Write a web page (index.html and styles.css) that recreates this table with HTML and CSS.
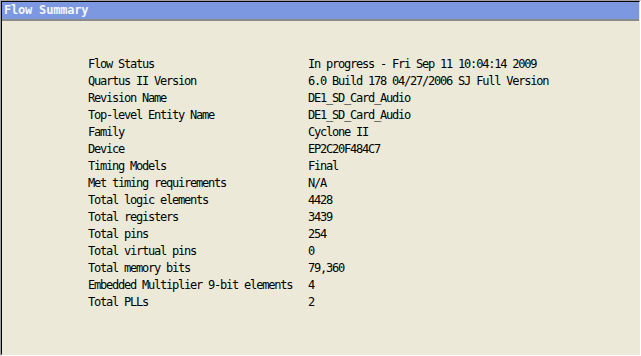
FILE: index.html
```html
<!DOCTYPE html>
<html>
<head>
<meta charset="utf-8">
<link rel="stylesheet" href="styles.css">
</head>
<body>
<div class="frame">
  <div class="inner">
    <div class="title">Flow Summary</div>
    <div class="content">
      <div class="summary">
        <div class="k">Flow Status</div><div class="v">In progress - Fri Sep 11 10:04:14 2009</div>
        <div class="k">Quartus II Version</div><div class="v">6.0 Build 178 04/27/2006 SJ Full Version</div>
        <div class="k">Revision Name</div><div class="v">DE1_SD_Card_Audio</div>
        <div class="k">Top-level Entity Name</div><div class="v">DE1_SD_Card_Audio</div>
        <div class="k">Family</div><div class="v">Cyclone II</div>
        <div class="k">Device</div><div class="v">EP2C20F484C7</div>
        <div class="k">Timing Models</div><div class="v">Final</div>
        <div class="k">Met timing requirements</div><div class="v">N/A</div>
        <div class="k">Total logic elements</div><div class="v">4428</div>
        <div class="k">Total registers</div><div class="v">3439</div>
        <div class="k">Total pins</div><div class="v">254</div>
        <div class="k">Total virtual pins</div><div class="v">0</div>
        <div class="k">Total memory bits</div><div class="v">79,360</div>
        <div class="k">Embedded Multiplier 9-bit elements</div><div class="v">4</div>
        <div class="k">Total PLLs</div><div class="v">2</div>
      </div>
    </div>
  </div>
</div>
</body>
</html>
```
FILE: styles.css
```css
html, body {
  margin: 0;
  padding: 0;
  background: #ece9d8;
}
.frame {
  box-sizing: border-box;
  width: 641px;
  height: 356px;
  border-style: solid;
  border-width: 1px;
  border-color: #a0a0a0 #ffffff #ffffff #a0a0a0;
}
.inner {
  box-sizing: border-box;
  height: 100%;
  display: flex;
  flex-direction: column;
  border-style: solid;
  border-width: 1px;
  border-color: #000000 #ece9d8 #ece9d8 #000000;
  background: #ece9d8;
}
.title {
  height: 17px;
  line-height: 17px;
  background: #7b98e0;
  border-bottom: 2px solid #8a8a8a;
  color: #f4f6fc;
  font-family: "DejaVu Sans Mono", monospace;
  font-weight: bold;
  font-size: 12px;
  letter-spacing: -0.2px;
  padding-left: 2px;
  white-space: pre;
}
.content {
  flex: 1;
  padding: 35px 0 0 86px;
}
.summary {
  display: grid;
  grid-template-columns: 220px auto;
  grid-auto-rows: 17px;
  font-family: "DejaVu Sans Mono", monospace;
  font-size: 12px;
  line-height: 17px;
  letter-spacing: -1.22px;
  color: #000;
}
.k, .v {
  white-space: pre;
}
```
